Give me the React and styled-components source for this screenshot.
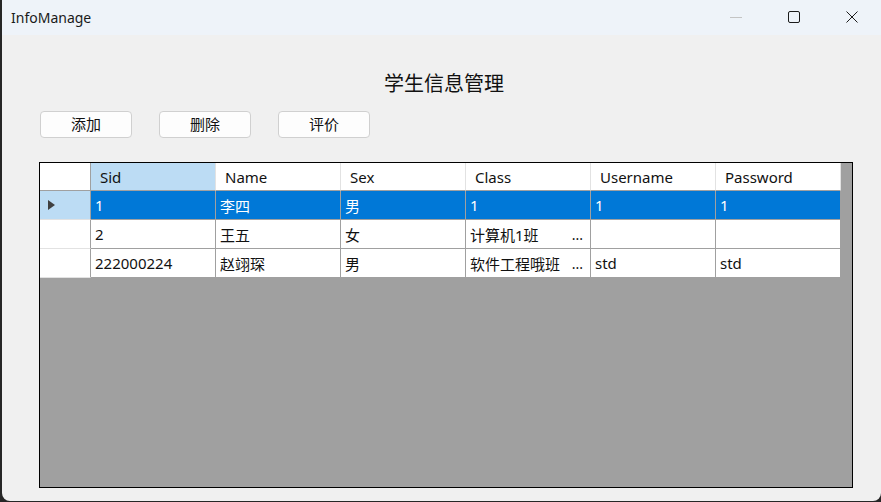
import React from "react";
import styled, { createGlobalStyle } from "styled-components";

const columns = ["Sid", "Name", "Sex", "Class", "Username", "Password"];

const rows = [
  { Sid: "1", Name: "李四", Sex: "男", Class: "1", Username: "1", Password: "1", selected: true },
  { Sid: "2", Name: "王五", Sex: "女", Class: "计算机1班", Username: "", Password: "", clipped: ["Class"] },
  { Sid: "222000224", Name: "赵翊琛", Sex: "男", Class: "软件工程哦班", Username: "std", Password: "std", clipped: ["Class"] },
];

const App = () => {
  return (
    <>
      <GlobalStyle />
      <Window>
        <TitleBar>
          <WindowTitle>InfoManage</WindowTitle>
          <Controls>
            <ControlButton>
              <svg width="14" height="14" viewBox="0 0 14 14">
                <line x1="1" y1="7.5" x2="13" y2="7.5" stroke="#c4c4c4" strokeWidth="1" />
              </svg>
            </ControlButton>
            <ControlButton>
              <svg width="14" height="14" viewBox="0 0 14 14">
                <rect x="1.5" y="1.5" width="11" height="11" rx="1.5" fill="none" stroke="#1b1b1b" strokeWidth="1" />
              </svg>
            </ControlButton>
            <ControlButton>
              <svg width="14" height="14" viewBox="0 0 14 14">
                <path d="M1.5 1.5 L12.5 12.5 M12.5 1.5 L1.5 12.5" stroke="#1b1b1b" strokeWidth="1" />
              </svg>
            </ControlButton>
          </Controls>
        </TitleBar>
        <Client>
          <Heading>学生信息管理</Heading>
          <Toolbar>
            <ActionButton>添加</ActionButton>
            <ActionButton>删除</ActionButton>
            <ActionButton>评价</ActionButton>
          </Toolbar>
          <DataGrid>
            <Table>
              <CornerCell />
              {columns.map((c) => (
                <HeaderCell key={c} active={c === "Sid"}>{c}</HeaderCell>
              ))}
              {rows.map((r, i) => (
                <React.Fragment key={i}>
                  <RowHeader selected={r.selected}>
                    {r.selected && <Arrow />}
                  </RowHeader>
                  {columns.map((c) => (
                    <Cell key={c} selected={r.selected}>
                      <span>{r[c]}</span>
                      {r.clipped && r.clipped.includes(c) && <Dots>...</Dots>}
                    </Cell>
                  ))}
                </React.Fragment>
              ))}
            </Table>
          </DataGrid>
        </Client>
      </Window>
    </>
  );
};

export default App;

const GlobalStyle = createGlobalStyle`
  body {
    margin: 0;
    background-color: #262626;
    font-family: "Noto Sans", "Noto Sans CJK SC", sans-serif;
  }
`;

const Window = styled.div`
  width: 879px;
  height: 501px;
  margin-left: 2px;
  background-color: #f0f0f0;
  border-radius: 0 0 8px 8px;
  display: flex;
  flex-direction: column;
  overflow: hidden;
`;

const TitleBar = styled.div`
  height: 35px;
  background-color: #eef3f9;
  display: flex;
  align-items: center;
  justify-content: space-between;
`;

const WindowTitle = styled.div`
  padding-left: 9px;
  font-size: 14px;
  color: #1a1a1a;
  margin-top: -1px;
`;

const Controls = styled.div`
  display: flex;
  height: 100%;
`;

const ControlButton = styled.div`
  width: 58px;
  height: 100%;
  display: flex;
  align-items: center;
  justify-content: center;
  margin-top: -1px;
`;

const Client = styled.div`
  flex: 1;
  padding-left: 37px;
  display: flex;
  flex-direction: column;
`;

const Heading = styled.div`
  margin-top: 35px;
  height: 28px;
  line-height: 28px;
  font-size: 20px;
  color: #111;
  text-align: center;
  padding-left: 5px;
  padding-right: 37px;
`;

const Toolbar = styled.div`
  margin-top: 13px;
  margin-left: 1px;
  display: flex;
  gap: 27px;
`;

const ActionButton = styled.button`
  width: 92px;
  height: 27px;
  background-color: #fdfdfd;
  border: 1px solid #d0d0d0;
  border-radius: 4px;
  font-family: "Noto Sans", "Noto Sans CJK SC", sans-serif;
  font-size: 15px;
  color: #111;
  padding: 0;
  line-height: 25px;
`;

const DataGrid = styled.div`
  margin-top: 24px;
  width: 814px;
  height: 326px;
  box-sizing: border-box;
  border: 1px solid #000;
  background-color: #a0a0a0;
`;

const Table = styled.div`
  display: grid;
  grid-template-columns: 51px repeat(6, 125px);
  grid-template-rows: 28px repeat(3, 29px);
`;

const CornerCell = styled.div`
  background-color: #fff;
  border-right: 1px solid #a0a0a0;
  border-bottom: 1px solid #a0a0a0;
`;

const HeaderCell = styled.div`
  background-color: ${(p) => (p.active ? "#bcdcf4" : "#fff")};
  border-right: 1px solid #e2e2e2;
  border-bottom: 1px solid #a0a0a0;
  display: flex;
  align-items: center;
  padding-left: 9px;
  font-size: 15px;
  color: #111;
  &:last-child {
    border-right-color: #a0a0a0;
  }
`;

const RowHeader = styled.div`
  background-color: ${(p) => (p.selected ? "#bcdcf4" : "#fff")};
  border-right: 1px solid #a0a0a0;
  border-bottom: 1px solid #e2e2e2;
  display: flex;
  align-items: center;
  padding-left: 8px;
`;

const Arrow = styled.div`
  width: 0;
  height: 0;
  border-top: 5px solid transparent;
  border-bottom: 5px solid transparent;
  border-left: 7px solid #404040;
`;

const Cell = styled.div`
  background-color: ${(p) => (p.selected ? "#0078d7" : "#fff")};
  color: ${(p) => (p.selected ? "#fff" : "#111")};
  border-right: 1px solid #a0a0a0;
  border-bottom: 1px solid #a0a0a0;
  display: flex;
  align-items: center;
  justify-content: space-between;
  padding: 0 7px 0 4px;
  font-size: 15px;
  white-space: nowrap;
  overflow: hidden;
`;

const Dots = styled.span`
  font-size: 14px;
`;
